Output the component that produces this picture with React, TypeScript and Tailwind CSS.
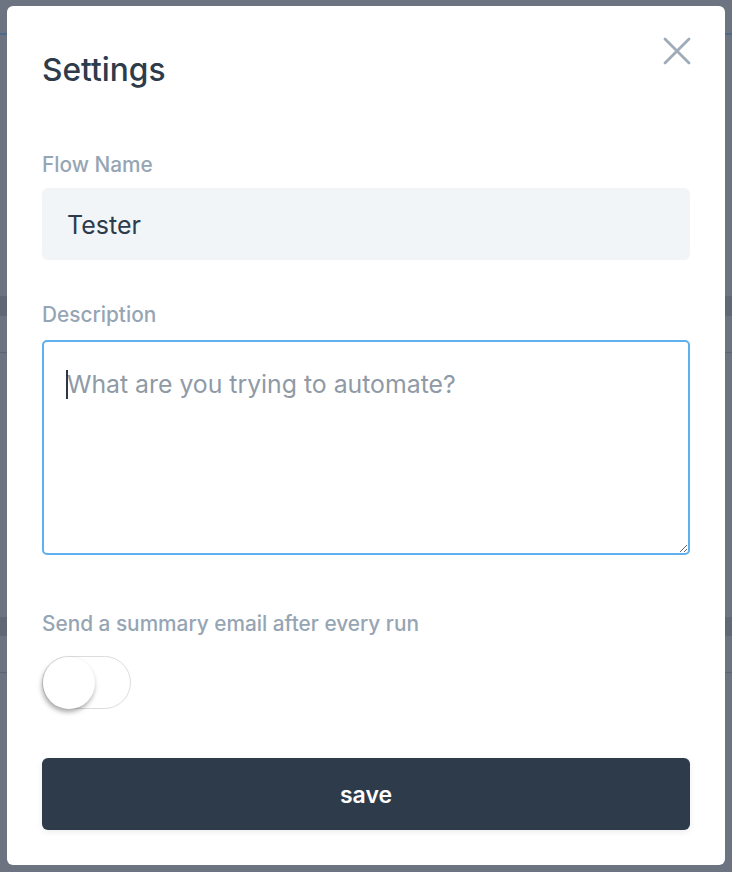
import { useState } from "react";

export default function App() {
  const [on, setOn] = useState(false);

  return (
    <div className="relative w-full h-[872px] overflow-hidden bg-[#6b7480] font-['Inter','Noto_Sans',sans-serif]">
      {/* dimmed page behind the modal */}
      <div className="flex flex-col">
        <div className="h-[33px]" />
        <div className="h-[2px] bg-[#4d6a88]" />
        <div className="h-[261px]" />
        <div className="h-[20px] bg-[#5f6874]" />
        <div className="h-[36px]" />
        <div className="h-px bg-[#5b6470]" />
        <div className="h-[264px]" />
        <div className="h-[19px] bg-[#5f6874]" />
        <div className="h-[36px]" />
        <div className="h-px bg-[#5b6470]" />
      </div>

      {/* Modal */}
      <div className="absolute left-[7px] top-[6px] w-[718px] rounded-md bg-white px-[35px] pt-[47px] pb-[35px]">
        <button className="absolute right-[34px] top-[31px] text-[#9eabb8]" aria-label="close">
          <svg width="28" height="28" viewBox="0 0 28 28" fill="none" stroke="currentColor" strokeWidth="2.8" strokeLinecap="round">
            <path d="M2 2L26 26M26 2L2 26" />
          </svg>
        </button>

        <h1 className="text-[31.7px] leading-[34px] font-medium text-[#2d3b4b]">Settings</h1>

        <label className="block mt-[66px] text-[20.8px] leading-[24px] font-medium text-[#96a5b4]">Flow Name</label>
        <div className="mt-[11px] h-[72px] rounded-md bg-[#f1f5f8] px-[25px] flex items-center">
          <span className="pt-[3px] text-[25px] text-[#2d3b4b]">Tester</span>
        </div>

        <label className="block mt-[43px] text-[20.8px] leading-[24px] font-medium text-[#96a5b4]">Description</label>
        <div className="relative mt-[13px]">
          <textarea
            className="block w-full h-[215px] rounded-[5px] border-2 border-[#5eb0ef] px-[23px] pt-[24px] text-[24.8px] leading-[36px] text-[#2d3b4b] placeholder:text-[#8f9aa6] outline-none resize-y"
            placeholder="What are you trying to automate?"
          />
          <span className="absolute left-[24px] top-[30px] h-[29px] w-[2px] bg-[#2d3748]" />
        </div>

        <label className="block mt-[57px] text-[20.8px] leading-[24px] font-medium text-[#96a5b4]">
          Send a summary email after every run
        </label>
        <button
          onClick={() => setOn(!on)}
          className="mt-[20px] flex h-[53px] w-[89px] items-center rounded-full border-[1.5px] border-[#dcdcdc] bg-white"
        >
          <span className="h-[52px] w-[52px] rounded-full bg-white shadow-[-1px_3px_5px_rgba(0,0,0,0.35)]" />
        </button>

        <button className="mt-[49px] flex h-[72px] w-full items-center justify-center rounded-md bg-[#2d3b4b] pt-[3px] text-[23px] font-semibold text-white shadow-[0_2px_6px_rgba(0,0,0,0.08)]">
          save
        </button>
      </div>
    </div>
  );
}
